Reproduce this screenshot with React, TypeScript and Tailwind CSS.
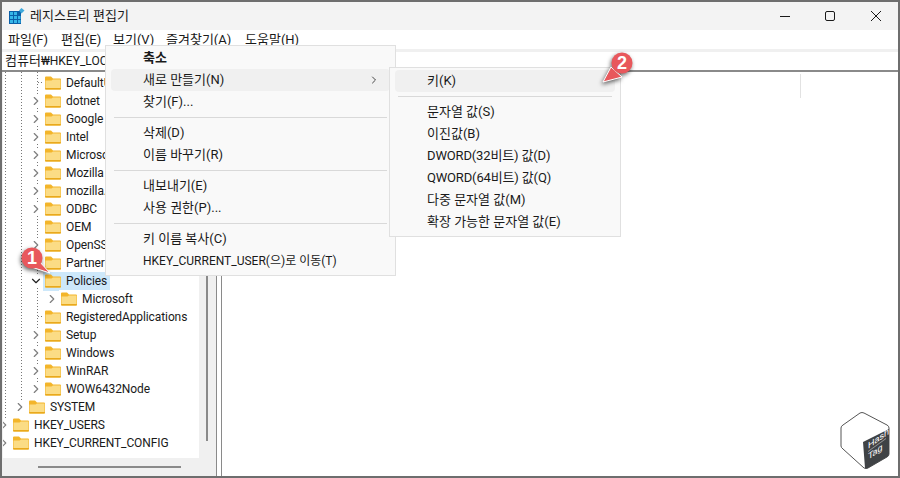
import React from "react";
import {ChevronRight, ChevronDown} from "lucide-react";

const uiFont = "font-['Roboto','Noto_Sans_CJK_KR',sans-serif]";

interface TreeRow {
  label: string;
  indent: number;
  arrow?: "right" | "down";
  selected?: boolean;
}

const rows: TreeRow[] = [
  {label: "DefaultUserEnvironment", indent: 3},
  {label: "dotnet", indent: 3, arrow: "right"},
  {label: "Google", indent: 3, arrow: "right"},
  {label: "Intel", indent: 3, arrow: "right"},
  {label: "Microsoft", indent: 3, arrow: "right"},
  {label: "Mozilla", indent: 3, arrow: "right"},
  {label: "mozilla.org", indent: 3, arrow: "right"},
  {label: "ODBC", indent: 3, arrow: "right"},
  {label: "OEM", indent: 3},
  {label: "OpenSSH", indent: 3, arrow: "right"},
  {label: "Partner", indent: 3},
  {label: "Policies", indent: 3, arrow: "down", selected: true},
  {label: "Microsoft", indent: 4, arrow: "right"},
  {label: "RegisteredApplications", indent: 3},
  {label: "Setup", indent: 3, arrow: "right"},
  {label: "Windows", indent: 3, arrow: "right"},
  {label: "WinRAR", indent: 3, arrow: "right"},
  {label: "WOW6432Node", indent: 3, arrow: "right"},
  {label: "SYSTEM", indent: 2, arrow: "right"},
  {label: "HKEY_USERS", indent: 1, arrow: "right"},
  {label: "HKEY_CURRENT_CONFIG", indent: 1, arrow: "right"},
];

const Folder = () => (
  <svg width="16" height="14" viewBox="0 0 16 14" className="shrink-0">
    <path d="M0 1.5Q0 0.5 1 0.5H6L8 2.5H15Q16 2.5 16 3.5V12.5Q16 13.5 15 13.5H1Q0 13.5 0 12.5Z" fill="#f3b52a" />
    <path d="M0.5 4.5L6.5 4.5L8 3.5H15.5V12.5Q15.5 12.8 15 12.8H1Q0.5 12.8 0.5 12.5Z" fill="#fbdc85" />
    <rect x="0" y="12" width="16" height="1.5" rx="0.7" fill="#e9a91c" />
  </svg>
);

const RegeditIcon = () => (
  <svg width="16" height="16" viewBox="0 0 16 16" className="shrink-0">
    <rect x="0" y="3" width="12" height="13" fill="#0a5fa8" />
    <g fill="#35b6e8">
      <rect x="1" y="4" width="3" height="3" />
      <rect x="5" y="4" width="3" height="3" />
      <rect x="1" y="8" width="3" height="3" />
      <rect x="5" y="8" width="3" height="3" />
      <rect x="9" y="8" width="2.5" height="3" />
      <rect x="1" y="12" width="3" height="3" />
      <rect x="5" y="12" width="3" height="3" />
      <rect x="9" y="12" width="2.5" height="3" />
    </g>
    <path d="M12.5 0L15.5 2.5L12.5 5.5L10 2.5Z" fill="#3fa9dc" />
  </svg>
);

const Badge = ({n, flip}: {n: string; flip?: boolean}) => (
  <div className="relative w-[32px] h-[32px]">
    <svg width="32" height="32" viewBox="0 0 32 32" className="absolute inset-0 overflow-visible drop-shadow-[-1px_2px_2px_rgba(0,0,0,0.6)]">
      {flip ? (
        <path d="M10 15L2 30L21 25Z" fill="#e8585c" stroke="#fff" strokeWidth="1" />
      ) : (
        <path d="M4 18L29 26L17 13Z" fill="#e8585c" stroke="#fff" strokeWidth="1" />
      )}
      <circle cx={flip ? 21 : 11} cy="11" r="10.5" fill="#e8585c" />
    </svg>
    <span className={`absolute top-0 ${flip ? "left-[16px]" : "left-[6px]"} text-white font-bold text-[18px] leading-[22px] font-['Liberation_Sans',sans-serif]`}>
      {n}
    </span>
  </div>
);

const MenuItem = ({label, active, sub, className = ""}: {label: string; active?: boolean; sub?: boolean; className?: string}) => (
  <div className={`h-[22px] flex items-center justify-between rounded-[4px] pr-[10px] ${active ? "bg-[#f0f0f0]" : ""}`}>
    <span className={`pl-[32px] whitespace-nowrap ${className}`}>{label}</span>
    {sub && <ChevronRight size={12} strokeWidth={1.8} className="text-[#333]" />}
  </div>
);

const Sep = () => (
  <div className="h-[9px] flex items-center px-[3px]">
    <div className="h-px w-full bg-[#d9d9d9]" />
  </div>
);

export default function App() {
  return (
    <div className={`relative w-[900px] h-[478px] overflow-hidden bg-white border-2 border-[#6e6e6e] text-[12px] text-[#1a1a1a] flex flex-col ${uiFont}`}>
      {/* title bar */}
      <div className="h-[28px] shrink-0 bg-[#f3f3f3] flex items-center pl-[7px]">
        <RegeditIcon />
        <span className="ml-[5px] text-[13px]">레지스트리 편집기</span>
        <div className="ml-auto flex items-center">
          <svg width="10" height="10" viewBox="0 0 10 10" className="mr-[35px]" stroke="#1a1a1a" fill="none">
            <path d="M0 5.5H10" />
          </svg>
          <svg width="10" height="10" viewBox="0 0 10 10" className="mr-[36px]" stroke="#1a1a1a" fill="none">
            <rect x="0.5" y="0.5" width="9" height="9" rx="1.5" />
          </svg>
          <svg width="10" height="10" viewBox="0 0 10 10" className="mr-[17px]" stroke="#1a1a1a" fill="none">
            <path d="M0 0L10 10M10 0L0 10" />
          </svg>
        </div>
      </div>

      {/* menu bar */}
      <div className="h-[19px] shrink-0 bg-white flex items-center pl-[6px] text-[13px]">
        <span className="w-[53px]">파일(F)</span>
        <span className="w-[52px]">편집(E)</span>
        <span className="w-[53px]">보기(V)</span>
        <span className="w-[79px]">즐겨찾기(A)</span>
        <span>도움말(H)</span>
      </div>
      <div className="h-[3px] shrink-0 bg-[#f0f0f0]" />

      {/* address bar */}
      <div className="h-[18px] shrink-0 bg-white flex items-center pl-[3px] whitespace-nowrap text-[13px]">
        컴퓨터<span className="text-[12px]">₩HKEY_LOCAL_MACHINE</span>
      </div>
      <div className="h-[2px] shrink-0 bg-[#8a8a8a]" />

      {/* body */}
      <div className="flex-1 flex min-h-0 bg-white">
        <div className="w-[214px] shrink-0 flex flex-col bg-[#f0f0f0] pl-px">
          <div className="flex-1 flex min-h-0">
            <div className="relative w-[196px] bg-white pt-[2px] overflow-hidden tracking-[-0.1px]">
              {/* tree guide lines */}
              <svg width="196" height="386" className="absolute left-0 top-0" fill="none" stroke="#777" strokeDasharray="1 2">
                <path d="M2.5 0V352" />
                <path d="M18.5 0V334" />
                <path d="M34.5 0V316" />
                <path d="M35 10.5H42" />
                <path d="M35 244.5H42" />
              </svg>
              {rows.map((row, i) => (
                <div key={i} className="relative h-[18px] flex items-center" style={{paddingLeft: (row.indent - 1) * 16 + 8}}>
                  <span className="w-[14px] -ml-[14px] h-[18px] flex items-center justify-center shrink-0">
                    {row.arrow === "right" && <ChevronRight size={14} strokeWidth={2} className="text-[#7e7e7e] bg-white" />}
                    {row.arrow === "down" && <ChevronDown size={14} strokeWidth={2} className="text-[#222] bg-white" />}
                  </span>
                  <span className={`flex items-center h-[19px] pr-[3px] pl-[2px] whitespace-nowrap ${row.selected ? "bg-[#cde8fa]" : "bg-white"}`}>
                    <Folder />
                    <span className="ml-[5px]">{row.label}</span>
                  </span>
                </div>
              ))}
            </div>
            <div className="flex-1 flex flex-col pl-[7px] pt-[28px] pb-[17px]">
              <div className="flex-1 w-[2px] bg-[#8a8a8a]" />
            </div>
          </div>
          <div className="h-[18px] shrink-0 flex items-center pl-[35px]">
            <div className="w-[143px] h-[2px] bg-[#8a8a8a]" />
          </div>
        </div>
        <div className="w-[6px] shrink-0 bg-white border-l border-r border-[#8a8a8a]" />
        <div className="flex-1 flex flex-col items-end pr-[97px] pt-[2px]">
          <div className="w-px h-[24px] bg-[#e2e2e2]" />
        </div>
      </div>

      {/* context menu */}
      <div className="absolute left-[103px] top-[43px] w-[291px] h-[231px] bg-[#f9f9f9] border border-[#e0e0e0] px-[5px] pt-[1px] text-[13px]">
        <MenuItem label="축소" className="font-semibold" />
        <MenuItem label="새로 만들기(N)" active sub />
        <MenuItem label="찾기(F)..." />
        <Sep />
        <MenuItem label="삭제(D)" />
        <MenuItem label="이름 바꾸기(R)" />
        <Sep />
        <MenuItem label="내보내기(E)" />
        <MenuItem label="사용 권한(P)..." />
        <Sep />
        <MenuItem label="키 이름 복사(C)" />
        <MenuItem label="HKEY_CURRENT_USER(으)로 이동(T)" className="text-[12px]" />
      </div>

      {/* submenu */}
      <div className="absolute left-[387px] top-[65px] w-[232px] h-[170px] bg-[#f9f9f9] border border-[#e0e0e0] px-[5px] pt-[2px] text-[13px]">
        <MenuItem label="키(K)" active />
        <Sep />
        <MenuItem label="문자열 값(S)" />
        <MenuItem label="이진값(B)" />
        <MenuItem label="DWORD(32비트) 값(D)" className="tracking-[-0.15px]" />
        <MenuItem label="QWORD(64비트) 값(Q)" className="tracking-[-0.15px]" />
        <MenuItem label="다중 문자열 값(M)" />
        <MenuItem label="확장 가능한 문자열 값(E)" />
      </div>

      {/* callouts */}
      <div className="absolute left-[19px] top-[245px]">
        <Badge n="1" />
      </div>
      <div className="absolute left-[599px] top-[50px]">
        <Badge n="2" flip />
      </div>

      {/* watermark */}
      <svg width="54" height="62" viewBox="0 0 54 62" className="absolute left-[838px] top-[409px]">
        <path d="M20 2Q22 1 24 2L47 14Q49 15 49 17V43Q49 45 47 46L28 57Q26 58 24 57L3 38Q1 36.5 1 35V17Q1 15 3 14Z" fill="#fff" stroke="#555" strokeWidth="1" />
        <path d="M49 18V43Q49 45 47 46L28 57Q26 58 25 57L23 31Z" fill="#3f4245" />
        <g transform="translate(28 38) skewY(-36)" fill="#fff" fontFamily="Liberation Sans, sans-serif" fontSize="9">
          <text x="0" y="0">Hash</text>
          <rect x="0" y="2" width="18" height="1" fill="#999" />
          <text x="0" y="11">Tag</text>
        </g>
      </svg>
    </div>
  );
}
